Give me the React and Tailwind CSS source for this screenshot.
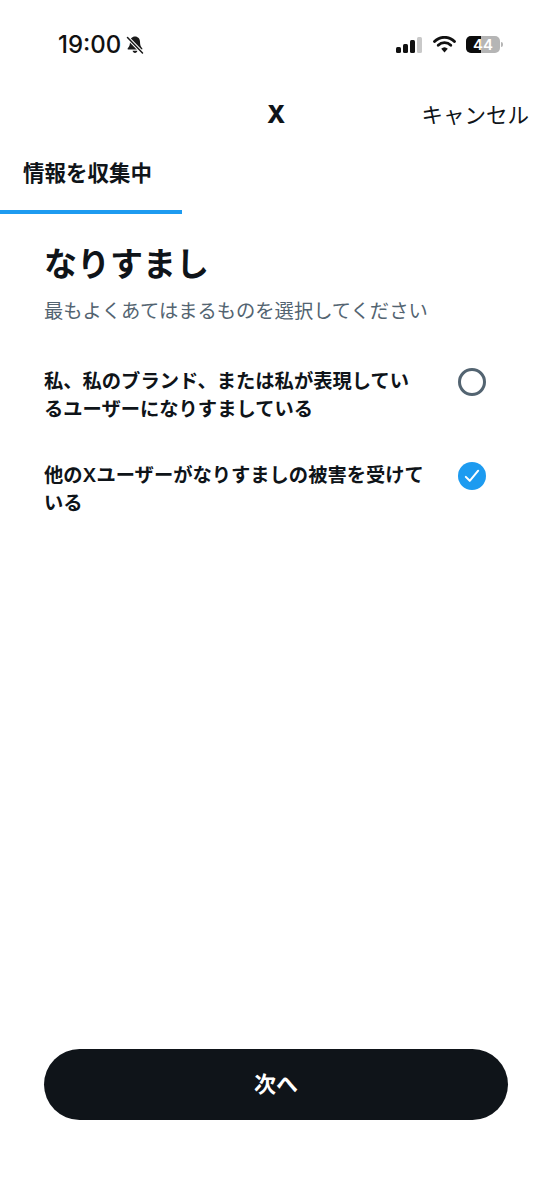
import React from "react";

const font = { fontFamily: '"Inter", "Noto Sans CJK JP", sans-serif' };

function MutedBell() {
  return (
    <svg width="20" height="20" viewBox="0 0 20 20" fill="none">
      <path d="M10 1.5c-3 0-5 2.4-5 5.3 0 3.6-.8 5-2.2 6.4-.5.5-.2 1.3.6 1.3h13.2c.8 0 1.1-.8.6-1.3-1.4-1.4-2.2-2.8-2.2-6.4 0-2.9-2-5.3-5-5.3z" fill="#1a1a1a" />
      <path d="M7.6 15.8c.3 1.3 1.2 2.2 2.4 2.2s2.100-.9 2.400-2.200z" fill="#1a1a1a" />
      <path d="M2.500 2.500l15 15.500" stroke="#fff" strokeWidth="3.500" />
      <path d="M2.500 2.500l15 15.500" stroke="#1a1a1a" strokeWidth="1.500" strokeLinecap="round" />
    </svg>
  );
}

function StatusIcons() {
  return (
    <div className="flex items-center">
      <div className="flex items-end gap-[2px] h-[16px]">
        <div className="w-[5px] h-[6px] bg-[#111] rounded-[1.500px]" />
        <div className="w-[5px] h-[9px] bg-[#111] rounded-[1.500px]" />
        <div className="w-[5px] h-[13px] bg-[#111] rounded-[1.500px]" />
        <div className="w-[5px] h-[16px] bg-[#c9c9c9] rounded-[1.500px]" />
      </div>
      <svg className="ml-[11px]" width="23" height="17" viewBox="0 0 23 17" fill="none">
        <path d="M1.500 5.500a14 14 0 0 1 20 0" stroke="#111" strokeWidth="2.800" strokeLinecap="round" />
        <path d="M5.200 9.200a9 9 0 0 1 12.600 0" stroke="#111" strokeWidth="2.800" strokeLinecap="round" />
        <path d="M11.500 16.500l-3.300-3.700a4.800 4.800 0 0 1 6.600 0z" fill="#111" />
      </svg>
      <div className="ml-[10px] relative w-[34px] h-[17px] rounded-[5px] overflow-hidden bg-[#b5b5b5]">
        <div className="h-full w-[15px] bg-[#0c0c0c]" />
        <span className="absolute inset-0 flex items-center justify-center text-white text-[15px] font-semibold leading-none">44</span>
      </div>
      <div className="ml-[1px] w-[2px] h-[5px] rounded-r-sm bg-[#b5b5b5]" />
    </div>
  );
}

function Option({ label, checked }) {
  return (
    <div className="flex items-start justify-between">
      <p className="w-[381px] text-[19.300px] leading-[28px] font-semibold text-[#0f1419]">{label}</p>
      <div className="w-[28px] h-[28px] mr-[22px] mt-[1px] shrink-0">
        {checked ? (
          <div className="w-[28px] h-[28px] rounded-full bg-[#1d9bf0] flex items-center justify-center">
            <svg width="18" height="18" viewBox="0 0 16 16" fill="none">
              <path d="M2.500 8.800l3.500 3.500 7.500-9" stroke="#fff" strokeWidth="1.800" strokeLinecap="round" strokeLinejoin="round" />
            </svg>
          </div>
        ) : (
          <div className="w-[28px] h-[28px] rounded-full border-[3px] border-[#536471]" />
        )}
      </div>
    </div>
  );
}

export default function App() {
  return (
    <div className="w-[552px] h-[1200px] bg-white flex flex-col text-[#0f1419]" style={font}>
      <div className="h-[90px] flex items-start justify-between pt-[31px] pl-[58px] pr-[49px]">
        <div className="flex items-center gap-[4px]">
          <span className="text-[24px] leading-[28px] font-medium text-[#111]">19:00</span>
          <MutedBell />
        </div>
        <div className="pt-[5px]">
          <StatusIcons />
        </div>
      </div>

      <div className="h-[50px] flex items-center justify-end relative pr-[23px]">
        <span className="absolute left-[267px] top-[9px] text-[24px] leading-[32px] font-extrabold">X</span>
        <span className="text-[21.500px] leading-[50px] text-[#0f1419]">キャンセル</span>
      </div>

      <div className="h-[74px]">
        <p className="pl-[23px] pt-[17px] text-[21.500px] leading-[32px] font-semibold">情報を収集中</p>
        <div className="mt-[21px] w-[182px] h-[4px] bg-[#1d9bf0]" />
      </div>

      <div className="flex-1 flex flex-col px-[44px] pb-[80px]">
        <h1 className="mt-[28px] text-[33px] leading-[44px] font-semibold">なりすまし</h1>
        <p className="mt-[11px] text-[19.300px] leading-[28px] text-[#536471]">最もよくあてはまるものを選択してください</p>
        <div className="mt-[42px] flex flex-col gap-[38px]">
          <Option label="私、私のブランド、または私が表現しているユーザーになりすましている" />
          <Option label="他のXユーザーがなりすましの被害を受けている" checked />
        </div>
        <button className="mt-auto w-[464px] h-[71px] rounded-full bg-[#0f1419] text-white text-[22px] font-semibold">次へ</button>
      </div>
    </div>
  );
}
